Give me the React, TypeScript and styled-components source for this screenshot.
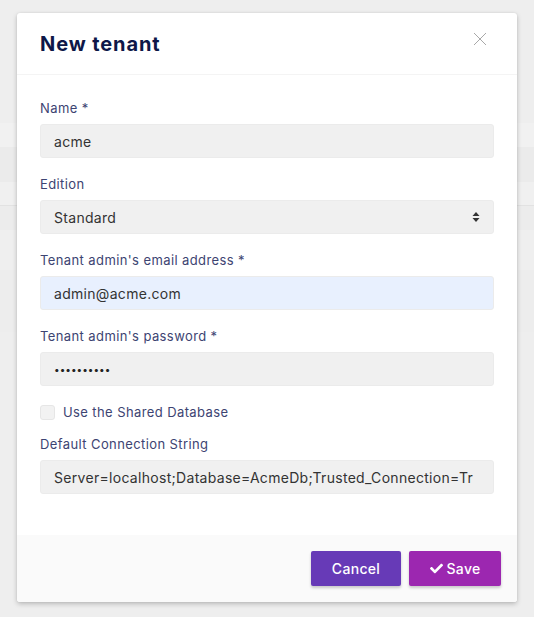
import React from "react";
import styled, { createGlobalStyle } from "styled-components";
import { FaCheck } from "react-icons/fa";

const Global = createGlobalStyle`
  html, body { margin: 0; padding: 0; }
  body { background: #eeeeee; font-family: Inter, "Noto Sans", "Liberation Sans", sans-serif; }
  * { box-sizing: border-box; }
`;

const Page = styled.div`
  position: relative;
  width: 534px;
  height: 617px;
  overflow: hidden;
  background: #eeeeee;
`;

const Backdrop = styled.div`
  display: flex;
  flex-direction: column;
  padding-top: 123px;
`;

const Band = styled.div<{ $h: number; $bg: string; $line?: boolean }>`
  height: ${(p) => p.$h}px;
  background: ${(p) => p.$bg};
  border-bottom: ${(p) => (p.$line ? "1px solid #e2e2e2" : "none")};
`;

const Modal = styled.div`
  position: absolute;
  left: 17px;
  top: 13px;
  width: 500px;
  background: #fff;
  border-radius: 3px;
  box-shadow: 0 2px 5px rgba(0, 0, 0, 0.22), 0 0 2px rgba(0, 0, 0, 0.08);
  overflow: hidden;
`;

const Header = styled.div`
  height: 62px;
  padding: 0 23px;
  display: flex;
  align-items: center;
  justify-content: space-between;
  border-bottom: 1px solid #f4f4f4;
`;

const Title = styled.h4`
  margin: 0;
  font-size: 20px;
  font-weight: 700;
  color: #0e1748;
  letter-spacing: 0.9px;
  padding-top: 1px;
`;

const Close = styled.button`
  border: 0;
  background: none;
  padding: 0;
  width: 14px;
  height: 14px;
  margin-right: 7px;
  margin-top: -10px;
  display: flex;
  cursor: pointer;
`;

const Body = styled.div`
  padding: 23px 23px 25px;
  display: flex;
  flex-direction: column;
`;

const Group = styled.div<{ $mb?: number }>`
  display: flex;
  flex-direction: column;
  margin-bottom: ${(p) => (p.$mb ?? 16)}px;
`;

const Label = styled.label`
  font-size: 13px;
  line-height: 20px;
  letter-spacing: 0.4px;
  color: #3d4472;
  margin-bottom: 6px;
`;

const Input = styled.div<{ $bg?: string }>`
  height: 34px;
  border-radius: 3px;
  border: 1px solid #ebebeb;
  background: ${(p) => p.$bg ?? "#f0f0f0"};
  padding: 0 13px;
  display: flex;
  align-items: center;
  justify-content: space-between;
  gap: 8px;
  font-size: 14px;
  letter-spacing: 0.3px;
  color: #333;
  white-space: nowrap;
`;

const Value = styled.span`
  flex: 1;
  min-width: 0;
`;

const Dots = styled.span`
  font-size: 10px;
  letter-spacing: 0px;
  color: #222;
`;

const CheckRow = styled.div`
  display: flex;
  align-items: center;
  gap: 8px;
  height: 20px;
  margin-bottom: 12px;
  font-size: 13px;
  letter-spacing: 0.4px;
  color: #3d4472;
`;

const Box = styled.span`
  width: 15px;
  height: 15px;
  border-radius: 3px;
  border: 1px solid #e6e6e6;
  background: #f2f2f2;
`;

const Footer = styled.div`
  background: #fafafa;
  padding: 16px;
  display: flex;
  justify-content: flex-end;
  gap: 8px;
`;

const Button = styled.button<{ $bg: string; $w: number }>`
  width: ${(p) => p.$w}px;
  height: 35px;
  border: 0;
  border-radius: 2px;
  background: ${(p) => p.$bg};
  color: #fff;
  font-family: inherit;
  font-size: 14px;
  font-weight: 500;
  letter-spacing: 0.3px;
  display: flex;
  align-items: center;
  justify-content: center;
  gap: 4px;
  box-shadow: 0 2px 3px rgba(0, 0, 0, 0.2);
`;

export default function App() {
  return (
    <>
      <Global />
      <Page>
        <Backdrop>
          <Band $h={24} $bg="#f1f1f1" />
          <Band $h={35} $bg="#ebebeb" />
          <Band $h={24} $bg="#f0f0f0" $line />
          <Band $h={24} $bg="#ececec" />
          <Band $h={40} $bg="#efefef" />
          <Band $h={62} $bg="#ededed" />
        </Backdrop>
        <Modal>
          <Header>
            <Title>New tenant</Title>
            <Close aria-label="close">
              <svg width="14" height="14" viewBox="0 0 14 14">
                <path d="M1 1L13 13M13 1L1 13" stroke="#a8a8a8" strokeWidth="1" />
              </svg>
            </Close>
          </Header>
          <Body>
            <Group>
              <Label>Name *</Label>
              <Input><Value>acme</Value></Input>
            </Group>
            <Group>
              <Label>Edition</Label>
              <Input>
                <Value>Standard</Value>
                <svg width="8" height="12" viewBox="0 0 8 12">
                  <path d="M4 1L7.5 5H0.5Z M4 11L7.5 7H0.5Z" fill="#333" />
                </svg>
              </Input>
            </Group>
            <Group>
              <Label>Tenant admin's email address *</Label>
              <Input $bg="#e8f0fe"><Value>admin@acme.com</Value></Input>
            </Group>
            <Group>
              <Label>Tenant admin's password *</Label>
              <Input>
                <Dots>••••••••••</Dots>
              </Input>
            </Group>
            <CheckRow>
              <Box />
              <span>Use the Shared Database</span>
            </CheckRow>
            <Group>
              <Label>Default Connection String</Label>
              <Input>
                <Value>Server=localhost;Database=AcmeDb;Trusted_Connection=Tr</Value>
              </Input>
            </Group>
          </Body>
          <Footer>
            <Button $bg="#673ab7" $w={90}>Cancel</Button>
            <Button $bg="#9c27b0" $w={92}>
              <FaCheck size={13} />
              Save
            </Button>
          </Footer>
        </Modal>
      </Page>
    </>
  );
}
